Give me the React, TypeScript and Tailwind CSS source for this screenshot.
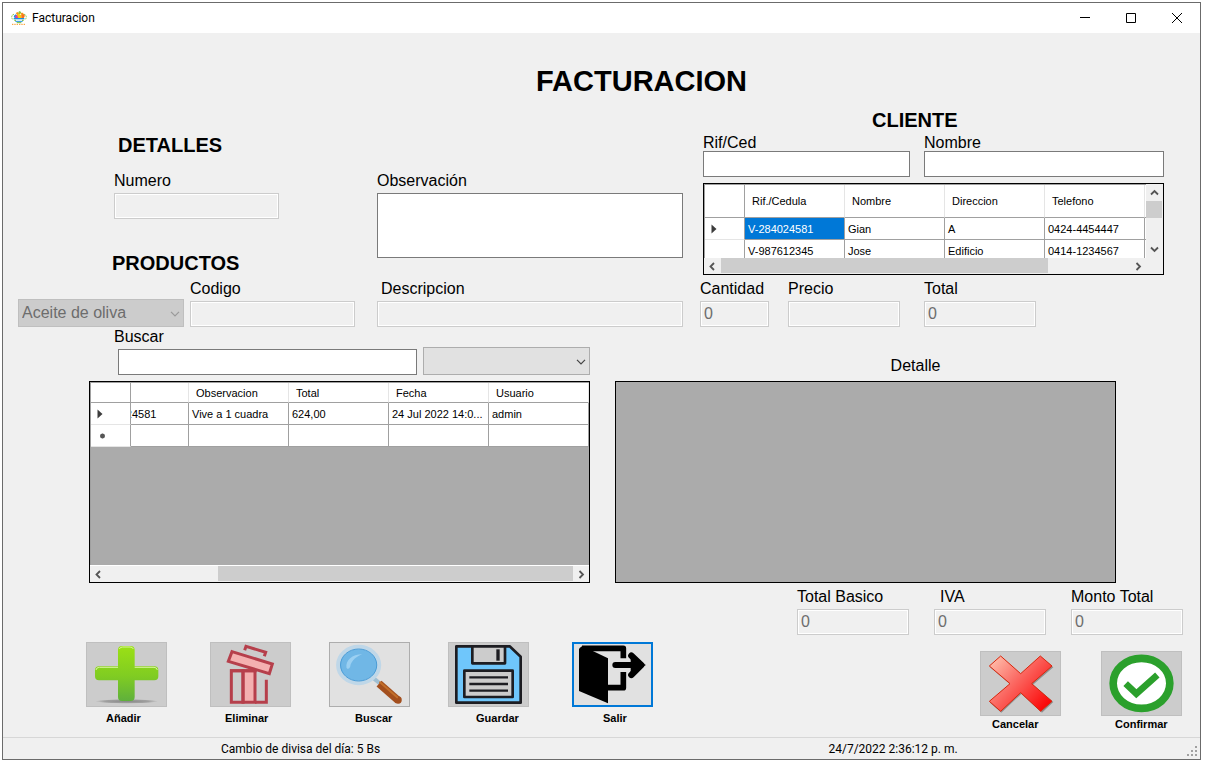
import type { ReactNode } from "react";

const inputLive =
  "block w-full h-[26px] bg-white border border-[#7a7a7a] px-[3px] text-[16px] outline-none rounded-none";
const inputOff =
  "block w-full h-[26px] bg-[#f0f0f0] border border-[#cccccc] shadow-[inset_0_0_0_1px_#ffffff] px-[3px] text-[16px] text-[#6d6d6d] outline-none rounded-none";
const labelText = "block text-[16px] leading-[16px] whitespace-nowrap";
const heading = "text-[20px] font-bold leading-[24px]";

function Field({
  id,
  label,
  value,
  className,
  gap = "mb-[4px]",
  enabled = false,
}: {
  id: string;
  label: string;
  value?: string;
  className: string;
  gap?: string;
  enabled?: boolean;
}) {
  return (
    <div className={className}>
      <label htmlFor={id} className={`${labelText} ${gap}`}>
        {label}
      </label>
      <input id={id} type="text" defaultValue={value} disabled={!enabled} className={enabled ? inputLive : inputOff} />
    </div>
  );
}

const chevrons = {
  left: "M7 2 3.5 5.5 7 9",
  right: "M3.5 2 7 5.5 3.5 9",
  up: "M2 7.5 5.5 4 9 7.5",
  down: "M2 3.5 5.5 7 9 3.5",
};

function ScrollArrow({ dir, label }: { dir: keyof typeof chevrons; label: string }) {
  return (
    <button type="button" aria-label={label} className="flex size-[16px] shrink-0 items-center justify-center">
      <svg viewBox="0 0 11 11" className="size-[11px]" fill="none" stroke="#555555" strokeWidth="1.8">
        <path d={chevrons[dir]} />
      </svg>
    </button>
  );
}

function SelectArrow({ color }: { color: string }) {
  return (
    <svg
      viewBox="0 0 10 6"
      className="pointer-events-none absolute top-[12px] right-[4px] h-[6px] w-[10px]"
      fill="none"
      stroke={color}
      strokeWidth="1.2"
    >
      <path d="M1 0.8 5 4.8 9 0.8" />
    </svg>
  );
}

const th = "border-b border-r border-b-[#a0a0a0] border-r-[#e5e5e5] bg-white pl-[7px] text-left font-normal";
const td = "border-b border-r border-[#a0a0a0] bg-white pl-[3px] overflow-hidden whitespace-nowrap";
const corner = "border-b border-r border-[#a0a0a0] bg-white";
const rowHead = "border-b border-r border-r-[#a0a0a0] border-b-[#e5e5e5] bg-white pl-[6px]";
const tableBase = "table-fixed border-separate border-spacing-0 text-[11px] leading-[14px]";

function CurrentRow() {
  return (
    <svg viewBox="0 0 6 10" className="block h-[10px] w-[6px]" fill="#3c3c3c">
      <path d="M0.5 0.5 5.5 5 0.5 9.5Z" />
    </svg>
  );
}

function NewRow() {
  return (
    <svg viewBox="0 0 12 6" className="block h-[6px] w-[12px]" stroke="#555555" strokeWidth="1.4">
      <path d="M5.5 0.5V5.5M3 3H8M3.7 1.2 7.3 4.8M7.3 1.2 3.7 4.8" />
    </svg>
  );
}

const clients = [
  { id: "V-284024581", name: "Gian", address: "A", phone: "0424-4454447" },
  { id: "V-987612345", name: "Jose", address: "Edificio", phone: "0414-1234567" },
];

function ClientGrid() {
  return (
    <div className="mt-[6px] flex h-[92px] border border-black">
      <div className="flex min-w-0 flex-1 flex-col">
        <div className="h-[74px] overflow-hidden border-t border-l border-[#a0a0a0] bg-white">
          <table className={`${tableBase} w-full`}>
            <colgroup>
              <col className="w-[40px]" />
              <col className="w-[100px]" />
              <col className="w-[100px]" />
              <col className="w-[100px]" />
              <col className="w-[100px]" />
              <col />
            </colgroup>
            <thead>
              <tr className="h-[33px]">
                <td className={corner} />
                <th className={th}>Rif./Cedula</th>
                <th className={th}>Nombre</th>
                <th className={th}>Direccion</th>
                <th className={th}>Telefono</th>
                <td className="border-b border-[#a0a0a0]" />
              </tr>
            </thead>
            <tbody>
              {clients.map((c, i) => (
                <tr key={c.id} className="h-[22px]">
                  <td className={rowHead}>{i === 0 && <CurrentRow />}</td>
                  <td
                    className={
                      i === 0
                        ? "overflow-hidden border-r border-b border-[#a0a0a0] bg-[#0078d7] pl-[3px] whitespace-nowrap text-white"
                        : td
                    }
                  >
                    {c.id}
                  </td>
                  <td className={td}>{c.name}</td>
                  <td className={td}>{c.address}</td>
                  <td className={td}>{c.phone}</td>
                  <td className="border-b border-[#a0a0a0]" />
                </tr>
              ))}
            </tbody>
          </table>
        </div>
        <div className="flex h-[16px] items-start">
          <ScrollArrow dir="left" label="Desplazar a la izquierda" />
          <div className="flex h-[15px] flex-1 pl-px">
            <div className="w-[80%] bg-[#cdcdcd]" />
          </div>
          <ScrollArrow dir="right" label="Desplazar a la derecha" />
        </div>
      </div>
      <div className="flex h-[73px] w-[17px] flex-col">
        <ScrollArrow dir="up" label="Desplazar hacia arriba" />
        <div className="flex-1 pt-px">
          <div className="mr-px h-[17px] bg-[#cdcdcd]" />
        </div>
        <ScrollArrow dir="down" label="Desplazar hacia abajo" />
      </div>
    </div>
  );
}

function InvoiceGrid() {
  return (
    <div className="mt-[6px] flex h-[202px] flex-col border border-black bg-[#ababab]">
      <div className="flex-1 overflow-hidden border-t border-l border-[#a0a0a0]">
        <table className={`${tableBase} w-full`}>
          <colgroup>
            <col className="w-[40px]" />
            <col className="w-[58px]" />
            <col className="w-[100px]" />
            <col className="w-[100px]" />
            <col className="w-[100px]" />
            <col />
          </colgroup>
          <thead>
            <tr className="h-[20px]">
              <td className={corner} />
              <th className={th} />
              <th className={th}>Observacion</th>
              <th className={th}>Total</th>
              <th className={th}>Fecha</th>
              <th className={th}>Usuario</th>
            </tr>
          </thead>
          <tbody>
            <tr className="h-[22px]">
              <td className={rowHead}>
                <CurrentRow />
              </td>
              <td className="overflow-hidden border-r border-b border-[#a0a0a0] bg-white">
                <div className="-ml-[40px]">V-284024581</div>
              </td>
              <td className={td}>Vive a 1 cuadra</td>
              <td className={td}>624,00</td>
              <td className={td}>24 Jul 2022 14:0...</td>
              <td className={td}>admin</td>
            </tr>
            <tr className="h-[22px]">
              <td className={rowHead}>
                <NewRow />
              </td>
              <td className={td} />
              <td className={td} />
              <td className={td} />
              <td className={td} />
              <td className={td} />
            </tr>
          </tbody>
        </table>
      </div>
      <div className="flex h-[17px] items-start border-t border-white bg-[#f0f0f0]">
        <ScrollArrow dir="left" label="Desplazar a la izquierda" />
        <div className="flex h-[15px] flex-1 justify-end">
          <div className="w-[76%] bg-[#cdcdcd]" />
        </div>
        <ScrollArrow dir="right" label="Desplazar a la derecha" />
      </div>
    </div>
  );
}

type Look = "off" | "on" | "focus";
const looks: Record<Look, string> = {
  off: "border border-[#bfbfbf] bg-[#cccccc]",
  on: "border border-[#adadad] bg-[#e1e1e1]",
  focus: "border-2 border-[#0078d7] bg-[#e1e1e1]",
};

function Action({
  id,
  label,
  look,
  pad,
  gap = "mt-[4px]",
  viewBox,
  children,
}: {
  id: string;
  label: string;
  look: Look;
  pad: string;
  gap?: string;
  viewBox: string;
  children: ReactNode;
}) {
  return (
    <div className="w-[81px]">
      <button
        id={id}
        type="button"
        aria-labelledby={`${id}-label`}
        disabled={look === "off"}
        className={`block h-[65px] w-full ${looks[look]}`}
      >
        <svg viewBox={viewBox} preserveAspectRatio="none" className="block size-full" fill="none">
          {children}
        </svg>
      </button>
      <label
        id={`${id}-label`}
        htmlFor={id}
        className={`block text-[11px] leading-[14px] font-bold whitespace-nowrap ${gap} ${pad}`}
      >
        {label}
      </label>
    </div>
  );
}

export default function App() {
  return (
    <div className="flex min-h-screen flex-col bg-white pt-[2px] pr-[4px] pb-[3px] pl-[2px] font-['Liberation_Sans',sans-serif] text-black">
      <div className="flex flex-1 flex-col border border-[#6b6b6b] bg-[#f0f0f0]">
        <header className="flex h-[30px] items-center bg-white pl-[8px] font-['Roboto',sans-serif] text-[12px]">
          <svg viewBox="0 0 48 42" className="mr-[5px] h-[14px] w-[16px]" fill="none">
            <path d="M9 10C1 11 0 21 6 26M39 10c8 1 9 11 3 16" stroke="#8cc63f" strokeWidth="3" strokeDasharray="5 2" />
            <path d="M8 15 14 10l7 5-3 7-8-2Z" fill="#1b8fe0" />
            <path d="M14 6 20 3l5 6-6 4Z" fill="#f7941d" />
            <path d="M22 3 26 0l5 4-3 5h-5Z" fill="#8cc63f" />
            <path d="M29 6 36 5l3 7-7 3Z" fill="#f7941d" />
            <path d="M18 12 24 8l7 5 0 8H18Z" fill="#ffcb05" />
            <path d="M31 13 37 9l5 5-4 8h-7Z" fill="#f7731d" />
            <path d="M12 15 18 12l4 9h-8Z" fill="#e5399b" />
            <path d="M8 23H40" stroke="#1b8fe0" strokeWidth="4" />
            <path d="M10 28H15M33 28H38" stroke="#8cc63f" strokeWidth="4" />
            <path d="M13 31H35" stroke="#1b8fe0" strokeWidth="3" />
            <path d="M17 35H31" stroke="#6cbf3f" strokeWidth="3" />
            <path d="M3 40H45" stroke="#f7941d" strokeWidth="3" strokeDasharray="4 3" />
          </svg>
          <span>Facturacion</span>
          <div className="ml-auto flex">
            <button type="button" aria-label="Minimizar" className="flex h-[30px] w-[46px] items-center justify-center">
              <svg viewBox="0 0 10 10" className="size-[10px]" stroke="#000000">
                <path d="M0 4.5H10" />
              </svg>
            </button>
            <button type="button" aria-label="Maximizar" className="flex h-[30px] w-[46px] items-center justify-center">
              <svg viewBox="0 0 10 10" className="size-[10px]" stroke="#000000" fill="none">
                <path d="M0.5 0.5H9.5V9.5H0.5Z" />
              </svg>
            </button>
            <button type="button" aria-label="Cerrar" className="flex h-[30px] w-[46px] items-center justify-center">
              <svg viewBox="0 0 10 10" className="size-[10px]" stroke="#000000">
                <path d="M0 0 10 10M10 0 0 10" />
              </svg>
            </button>
          </div>
        </header>

        <main className="flex flex-1 flex-col">
          <h1 className="pt-[34px] pl-[80px] text-center text-[29px] leading-[28px] font-bold">FACTURACION</h1>

          <section className="mt-[13px] flex pr-[36px] pl-[109px]">
            <div className="w-[167px] pt-[25px]">
              <h2 className={`${heading} pl-[6px]`}>DETALLES</h2>
              <Field id="numero" label="Numero" className="mt-[16px] pl-[2px]" />
              <h2 className={`${heading} mt-[32px]`}>PRODUCTOS</h2>
            </div>
            <div className="ml-[98px] min-w-0 flex-1 pt-[65px]">
              <label htmlFor="observacion" className={`${labelText} mb-[4px]`}>
                Observación
              </label>
              <textarea
                id="observacion"
                className="block h-[65px] w-full resize-none border border-[#7a7a7a] bg-white px-[3px] text-[16px] outline-none"
              />
            </div>
            <div className="ml-[20px] w-[461px]">
              <h2 className={`${heading} pb-[3px] pl-[169px]`}>CLIENTE</h2>
              <div className="flex gap-[14px]">
                <Field id="rif" label="Rif/Ced" className="w-[207px]" gap="mb-0" enabled />
                <Field id="nombre" label="Nombre" className="flex-1" gap="mb-0" enabled />
              </div>
              <ClientGrid />
            </div>
          </section>

          <section className="mt-[6px] flex items-end pr-[164px] pl-[15px]">
            <div className="relative w-[166px]">
              <select
                aria-label="Producto"
                disabled
                className="block h-[28px] w-full appearance-none rounded-none border border-[#bfbfbf] bg-[#cccccc] pr-[18px] pl-[3px] text-[16px] text-[#6d6d6d] opacity-100"
              >
                <option>Aceite de oliva</option>
              </select>
              <SelectArrow color="#9a9a9a" />
            </div>
            <Field id="codigo" label="Codigo" className="ml-[6px] w-[165px]" />
            <div className="ml-[22px] min-w-0 flex-1">
              <label htmlFor="descripcion" className={`${labelText} mb-[4px] pl-[4px]`}>
                Descripcion
              </label>
              <input id="descripcion" type="text" disabled className={inputOff} />
            </div>
            <Field id="cantidad" label="Cantidad" value="0" className="ml-[17px] w-[69px]" />
            <Field id="precio" label="Precio" className="ml-[19px] w-[112px]" />
            <Field id="total" label="Total" value="0" className="ml-[24px] w-[112px]" />
          </section>

          <section className="flex gap-[25px] pr-[84px] pl-[86px]">
            <div className="min-w-0 flex-1 pt-[2px]">
              <label htmlFor="buscar-texto" className={`${labelText} mb-[2px] pl-[25px]`}>
                Buscar
              </label>
              <div className="flex items-end gap-[6px] pl-[29px]">
                <div className="flex-1">
                  <input id="buscar-texto" type="text" className={inputLive} />
                </div>
                <div className="relative w-[167px]">
                  <select
                    aria-label="Criterio de busqueda"
                    className="block h-[28px] w-full appearance-none rounded-none border border-[#adadad] bg-[#e1e1e1] pr-[18px] pl-[3px] text-[16px]"
                  >
                    <option></option>
                  </select>
                  <SelectArrow color="#444444" />
                </div>
              </div>
              <InvoiceGrid />
            </div>
            <div className="min-w-0 flex-1">
              <h2 className="pt-[31px] pb-[7px] pl-[100px] text-center text-[16px] leading-[16px]">Detalle</h2>
              <div className="h-[202px] border border-black bg-[#ababab]" />
            </div>
          </section>

          <section className="mt-[6px] flex justify-end gap-[25px] pr-[17px]">
            <Field id="total-basico" label="Total Basico" value="0" className="w-[112px]" />
            <div className="w-[112px]">
              <label htmlFor="iva" className={`${labelText} mb-[4px] pl-[6px]`}>
                IVA
              </label>
              <input id="iva" type="text" defaultValue="0" disabled className={inputOff} />
            </div>
            <Field id="monto-total" label="Monto Total" value="0" className="w-[112px]" />
          </section>

          <section className="flex items-start justify-between pt-[7px] pr-[18px] pb-[6px] pl-[83px]">
            <div className="flex gap-[43px]">
              <Action id="anadir" label="Añadir" look="off" pad="pl-5" viewBox="51 24 237 189">
                <defs>
                  <linearGradient id="green" x1="0" y1="33" x2="0" y2="198" gradientUnits="userSpaceOnUse">
                    <stop offset="0" stopColor="#9be015" />
                    <stop offset="0.55" stopColor="#80cc22" />
                    <stop offset="1" stopColor="#5fb03c" />
                  </linearGradient>
                  <radialGradient id="shade">
                    <stop offset="0" stopColor="#888888" />
                    <stop offset="0.7" stopColor="#a0a0a0" />
                    <stop offset="1" stopColor="#cccccc" />
                  </radialGradient>
                </defs>
                <ellipse cx="170" cy="199" rx="94" ry="7" fill="url(#shade)" />
                <path
                  d="M156 33H182Q194 33 194 45V94H253Q265 94 265 106V124Q265 136 253 136H194V186Q194 198 182 198H156Q144 198 144 186V136H87Q75 136 75 124V106Q75 94 87 94H144V45Q144 33 156 33Z"
                  fill="url(#green)"
                />
                <path
                  d="M78 105Q79 97 88 97H144M194 97H252Q261 97 262 105M148 42Q150 36 158 36H180Q188 36 190 42"
                  stroke="#d8f59c"
                  strokeWidth="3"
                />
              </Action>
              <div className="flex gap-[38px]">
                <Action id="eliminar" label="Eliminar" look="off" pad="pl-[15px]" viewBox="423 24 237 189">
                  <g stroke="#b63f4b" strokeWidth="9">
                    <path d="M519 107H555V202H519Z" fill="#f4b0b0" />
                    <path d="M484 107H519V202H484Z" />
                    <path d="M555 202H589V134M480 107H560" />
                    <path d="M486 50 607 87 598 116 475 79Z" fill="#f4b0b0" />
                    <path d="M524 46 528 34 587 52 583 64" />
                  </g>
                </Action>
                <Action id="buscar" label="Buscar" look="on" pad="pl-[26px]" viewBox="60 24 240 189">
                  <path d="M190 128 210 144" stroke="#9fbfd3" strokeWidth="12" />
                  <ellipse cx="147" cy="90" rx="62" ry="54" fill="#70b7e6" stroke="#bfd7e8" strokeWidth="13" />
                  <ellipse cx="147" cy="90" rx="55" ry="48" stroke="#4a9bd6" strokeWidth="3" />
                  <path d="M110 98C107 77 127 58 158 58 143 64 125 74 121 96Q115 106 110 98Z" fill="#9bd0f2" />
                  <path d="M209 146 267 196" stroke="#a34f1e" strokeWidth="23" />
                  <circle cx="267" cy="195" r="11" fill="#a34f1e" />
                  <path d="M212 142 264 187" stroke="#c2702c" strokeWidth="6" strokeLinecap="round" />
                </Action>
                <Action id="guardar" label="Guardar" look="off" pad="pl-[28px]" viewBox="420 24 237 189">
                  <g stroke="#1d1d22" strokeWidth="8" strokeLinejoin="round">
                    <path d="M442 34H602L635 65V203H442Z" fill="#6fc6fb" />
                    <path d="M490 34H588V85H490Z" fill="#cccccc" />
                    <path d="M466 107H611V186H466Z" fill="#cccccc" />
                    <path d="M481 127H597M481 147H597M481 167H597" strokeWidth="7" />
                    <path d="M567 43V77" strokeWidth="10" />
                  </g>
                </Action>
              </div>
              <Action id="salir" label="Salir" look="focus" pad="pl-[31px]" viewBox="795 27 231 183">
                <path d="M813 38 820 33 897 70V205L810 168V42Z" fill="#000000" />
                <path d="M819 40H943V70M943 111V158H895" stroke="#000000" strokeWidth="17" strokeLinejoin="round" />
                <path d="M919 90H995" stroke="#000000" strokeWidth="18" strokeLinecap="round" />
                <path
                  d="M967 62 997 90 967 120"
                  stroke="#000000"
                  strokeWidth="19"
                  strokeLinecap="round"
                  strokeLinejoin="round"
                />
                <path d="M965 70 1011 90 965 112Z" fill="#000000" />
              </Action>
            </div>
            <div className="flex gap-10 pt-[9px]">
              <Action id="cancelar" label="Cancelar" look="off" pad="pl-3" gap="mt-px" viewBox="63 216 237 189">
                <defs>
                  <linearGradient id="red" x1="88" y1="228" x2="276" y2="394" gradientUnits="userSpaceOnUse">
                    <stop offset="0" stopColor="#ffc9b4" />
                    <stop offset="0.4" stopColor="#fb6f68" />
                    <stop offset="0.9" stopColor="#fb0808" />
                  </linearGradient>
                </defs>
                <path
                  d="M124 232 184 285 244 232 280 262 219 314 280 366 246 398 184 342 124 398 90 368 152 314 90 262Z"
                  fill="#909090"
                />
                <path
                  d="M122 228 182 281 241 228 276 258 215 311 276 364 242 394 182 338 122 394 88 364 150 311 88 258Z"
                  fill="url(#red)"
                  stroke="#d7260c"
                  strokeWidth="3"
                />
              </Action>
              <Action id="confirmar" label="Confirmar" look="off" pad="pl-3.5" gap="mt-px" viewBox="426 216 237 189">
                <ellipse cx="544.5" cy="310" rx="85" ry="75" fill="#ffffff" stroke="#2ba02c" strokeWidth="23" />
                <path d="M497 311 529 341 592 285" stroke="#2ba02c" strokeWidth="20" />
              </Action>
            </div>
          </section>
        </main>

        <footer className="relative mt-auto flex h-[22px] items-center border-t border-[#d7d7d7] font-['Roboto',sans-serif] text-[12px]">
          <p className="w-[51%] pl-[218px] whitespace-nowrap">Cambio de divisa del día: 5 Bs</p>
          <p className="flex-1 pl-[215px] whitespace-nowrap">24/7/2022 2:36:12 p. m.</p>
          <svg viewBox="0 0 11 11" className="absolute right-[2px] bottom-[2px] size-[11px]" fill="#a0a0a0">
            <path d="M8 0h2v2H8zM4 4h2v2H4zM8 4h2v2H8zM0 8h2v2H0zM4 8h2v2H4zM8 8h2v2H8z" />
          </svg>
        </footer>
      </div>
    </div>
  );
}
